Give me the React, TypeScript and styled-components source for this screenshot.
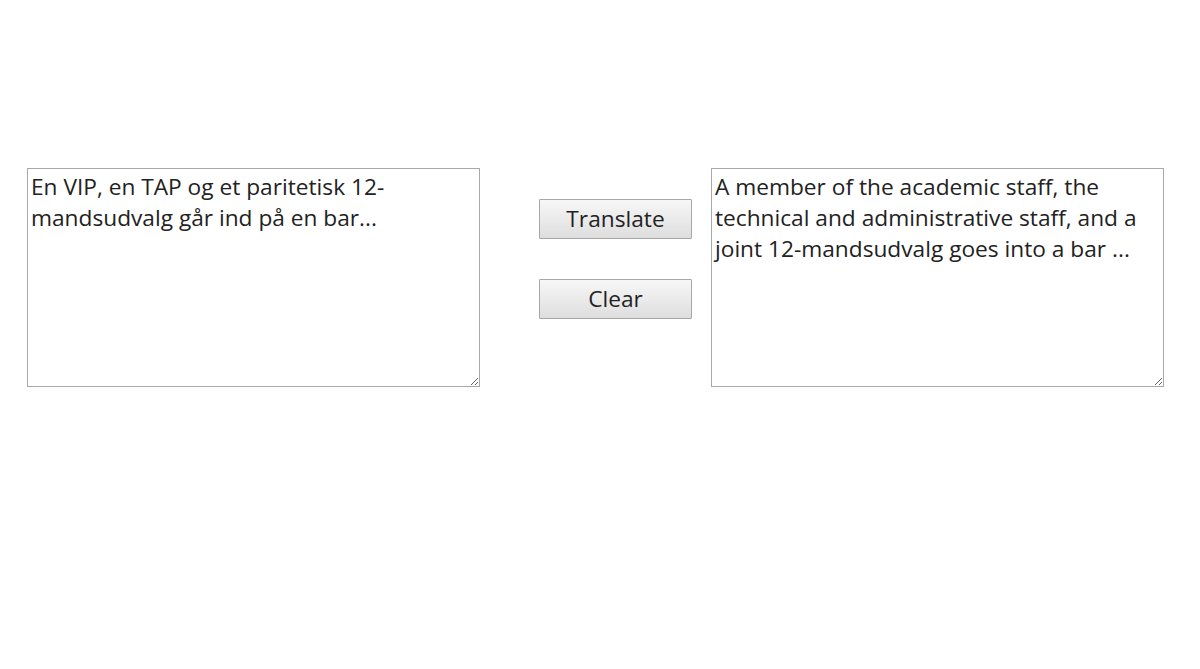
import * as React from "react";
import styled, { createGlobalStyle } from "styled-components";

const GlobalStyle = createGlobalStyle`
    html, body {
        margin: 0;
        padding: 0;
        background: #ffffff;
        font-family: "Open Sans", "DejaVu Sans", sans-serif;
    }
`;

const Page = styled.div`
    display: flex;
    flex-direction: row;
    align-items: flex-start;
    padding: 168px 0 0 27px;
    height: 669px;
    box-sizing: border-box;
`;

const TextPane = styled.textarea`
    width: 453px;
    height: 219px;
    box-sizing: border-box;
    margin: 0;
    padding: 2px 3px;
    border: 1px solid #a9a9a9;
    border-radius: 0;
    font-family: "Open Sans", "DejaVu Sans", sans-serif;
    font-size: 22.7px;
    line-height: 31px;
    color: #222222;
    background: #ffffff;
    resize: both;
    outline: none;
`;

const ButtonColumn = styled.div`
    display: flex;
    flex-direction: column;
    gap: 40px;
    margin: 31px 19px 0 59px;
`;

const ActionButton = styled.button`
    width: 153px;
    height: 40px;
    box-sizing: border-box;
    padding: 0 0 2px;
    border: 1px solid #a7a7a7;
    border-radius: 1px;
    background: linear-gradient(to bottom, #f7f7f7 0%, #dedede 100%);
    font-family: "Open Sans", "DejaVu Sans", sans-serif;
    font-size: 22.7px;
    color: #222222;
    cursor: pointer;
`;

const App = () => {
    const [source, setSource] = React.useState("En VIP, en TAP og et paritetisk 12-mandsudvalg går ind på en bar...");
    const [target, setTarget] = React.useState(
        "A member of the academic staff, the technical and administrative staff, and a joint 12-mandsudvalg goes into a bar ..."
    );

    const onClear = React.useCallback(() => {
        setSource("");
        setTarget("");
    }, []);

    return (
        <>
            <GlobalStyle />
            <Page>
                <TextPane value={source} onChange={(e) => setSource(e.target.value)} />
                <ButtonColumn>
                    <ActionButton type="button">Translate</ActionButton>
                    <ActionButton type="button" onClick={onClear}>
                        Clear
                    </ActionButton>
                </ButtonColumn>
                <TextPane value={target} onChange={(e) => setTarget(e.target.value)} />
            </Page>
        </>
    );
};

export default App;
